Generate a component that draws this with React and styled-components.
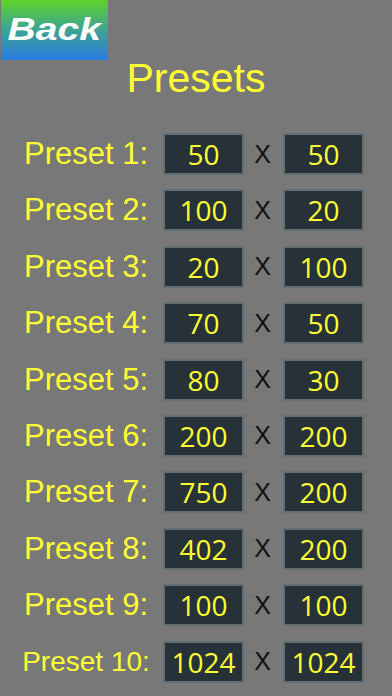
import React from 'react';
import styled, { createGlobalStyle } from 'styled-components';

const presets = [
    [50, 50],
    [100, 20],
    [20, 100],
    [70, 50],
    [80, 30],
    [200, 200],
    [750, 200],
    [402, 200],
    [100, 100],
    [1024, 1024],
];

const GlobalStyle = createGlobalStyle`
    html, body {
        margin: 0;
        padding: 0;
        background: #787878;
    }
`

function App() {
    return (
        <Page>
            <GlobalStyle />
            <BackButton>
                <BackLabel>Back</BackLabel>
            </BackButton>
            <Title>Presets</Title>
            <List>
                {presets.map(([w, h], i) => (
                    <Row key={i}>
                        <Label small={i + 1 >= 10}>Preset {i + 1}:</Label>
                        <Field>{w}</Field>
                        <Times>X</Times>
                        <Field>{h}</Field>
                    </Row>
                ))}
            </List>
        </Page>
    );
}

export default App

const Page = styled.div`
    min-height: 100vh;
    background: #787878;
    font-family: "Liberation Sans", Arial, sans-serif;
`

const BackButton = styled.div`
    width: 107px;
    height: 60px;
    margin-left: 1px;
    display: flex;
    align-items: center;
    justify-content: center;
    background: linear-gradient(to bottom, #5fd22a 0%, #3fa88a 45%, #2b7be3 100%);
    cursor: pointer;
`

const BackLabel = styled.span`
    display: inline-block;
    color: #ffffff;
    font-family: "Liberation Sans", Arial, sans-serif;
    font-weight: bold;
    font-style: italic;
    font-size: 32px;
    transform: scaleX(1.22);
    margin-top: -2px;
`

const Title = styled.div`
    margin-top: -2px;
    text-align: center;
    color: #ffff33;
    font-size: 41px;
    line-height: 40px;
`

const List = styled.div`
    display: flex;
    flex-direction: column;
    gap: 14.4px;
    padding: 35px 0 0 11px;
`

const Row = styled.div`
    display: grid;
    grid-template-columns: 152px 81px 39px 81px;
    align-items: center;
    height: 42px;
`

const Label = styled.div`
    padding-right: 2px;
    text-align: center;
    white-space: nowrap;
    color: #ffff33;
    font-size: ${props => props.small ? '28px' : '31px'};
`

const Field = styled.div`
    box-sizing: border-box;
    height: 42px;
    display: flex;
    align-items: center;
    justify-content: center;
    background: #263238;
    border: 2px solid #656c72;
    color: #ffff33;
    font-family: "Open Sans", sans-serif;
    font-size: 28px;
`

const Times = styled.div`
    padding-right: 2px;
    text-align: center;
    color: #111111;
    font-size: 25px;
`
